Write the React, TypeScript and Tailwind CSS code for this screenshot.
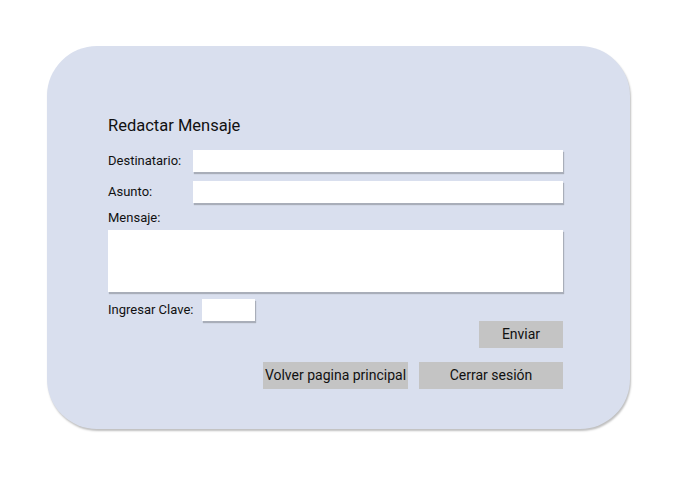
import React from 'react';

const font = { fontFamily: 'Roboto, "Liberation Sans", sans-serif' };

const Field = ({ className }: { className: string }) => (
  <div className={`bg-white shadow-[1px_2px_1px_rgba(0,0,0,0.22)] ${className}`} />
);

export default function App() {
  return (
    <div className="min-h-[481px] w-[677px] bg-white pl-[47px] pt-[46px]" style={font}>
      <div className="flex h-[383px] w-[583px] flex-col rounded-[50px] bg-[#d9dfee] pl-[61px] pr-[67px] pt-[70px] text-[#111] shadow-[1px_2px_2px_rgba(0,0,0,0.25)]">
        <h1 className="text-[16.5px] leading-[19px]">Redactar Mensaje</h1>

        {/* Destinatario / Asunto */}
        <div className="mt-[15px] flex items-center">
          <span className="w-[85px] text-[13px]">Destinatario:</span>
          <Field className="h-[22px] flex-1" />
        </div>
        <div className="mt-[9px] flex items-center">
          <span className="w-[85px] text-[13px]">Asunto:</span>
          <Field className="h-[22px] flex-1" />
        </div>

        {/* Mensaje */}
        <span className="mt-[7px] text-[13px] leading-[15px]">Mensaje:</span>
        <Field className="mt-[5px] h-[62px] w-full" />

        {/* Clave */}
        <div className="mt-[7px] flex items-center">
          <span className="w-[94px] text-[13px]">Ingresar Clave:</span>
          <Field className="h-[22px] w-[53px]" />
        </div>

        <div className="flex justify-end">
          <button className="h-[27px] w-[84px] bg-[#c4c4c4] text-[14px]">Enviar</button>
        </div>

        <div className="mt-[14px] flex justify-end gap-[11px]">
          <button className="h-[27px] w-[145px] bg-[#c4c4c4] text-[14px]">Volver pagina principal</button>
          <button className="h-[27px] w-[144px] bg-[#c4c4c4] text-[14px]">Cerrar sesión</button>
        </div>
      </div>
    </div>
  );
}
